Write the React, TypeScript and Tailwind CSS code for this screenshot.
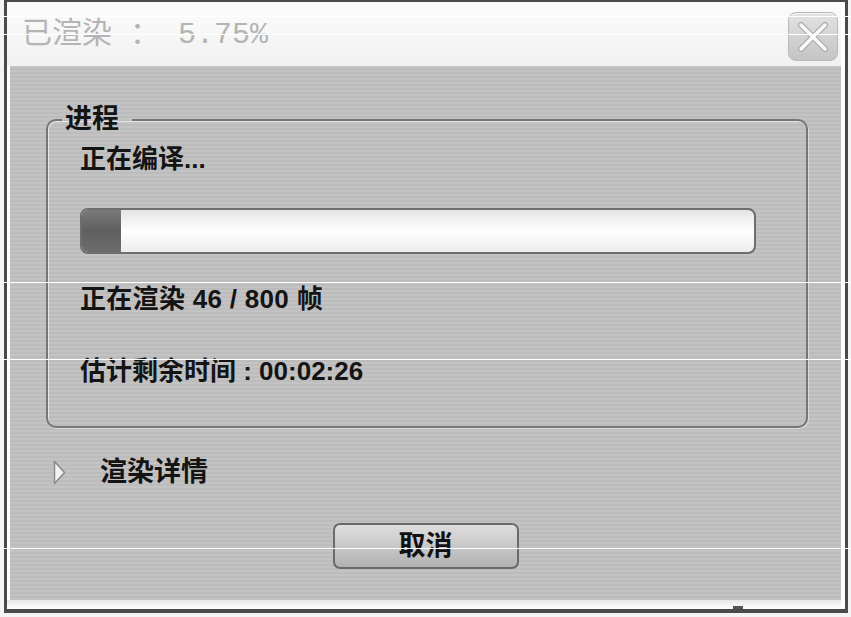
import React from 'react';

const cjk = "font-['Liberation_Sans','Noto_Sans_CJK_SC',sans-serif]";

// scanner artefacts in the source picture: thin white lines across the whole page
const scanLines = [16, 34, 282, 359, 548];

function CloseButton() {
  return (
    <button className="w-[50px] h-[49px] rounded-[8px] border border-[#b9b9b9] bg-gradient-to-b from-[#e2e2e2] to-[#c4c4c4] flex items-center justify-center shadow-[inset_0_1px_0_#f4f4f4]">
      <svg width="32" height="32" viewBox="0 0 32 32">
        <path d="M4 4 L28 28 M28 4 L4 28" stroke="#ababab" strokeWidth="6" strokeLinecap="round" />
        <path d="M4 4 L28 28 M28 4 L4 28" stroke="#fafafa" strokeWidth="3.5" strokeLinecap="round" />
      </svg>
    </button>
  );
}

function ProgressBar({ value }: { value: number }) {
  return (
    <div className="w-[676px] h-[46px] rounded-[8px] border-2 border-[#6e6e6e] bg-gradient-to-b from-[#e4e4e4] via-white to-[#ececec] overflow-hidden flex">
      <div
        className="h-full bg-gradient-to-b from-[#7a7a7a] via-[#5f5f5f] to-[#6d6d6d]"
        style={{ width: `${value}%` }}
      />
    </div>
  );
}

export default function App() {
  const rendered = 46;
  const total = 800;

  return (
    <div className="relative w-[851px] h-[617px] bg-[#f4f4f4] overflow-hidden">
      <div className="ml-[4px] w-[844px] h-[613px] border-t-2 border-l-[3px] border-r-[3px] border-b-[4px] border-[#4a4a4a] flex flex-col">
        {/* title bar */}
        <div className="h-[64px] shrink-0 bg-gradient-to-b from-[#fcfcfc] to-[#f1f1f1] border-r-[4px] border-white flex items-start justify-between pl-[15px] pr-[3px]">
          <div className="mt-[18px] text-[30px] leading-[30px] text-[#b4b4b4] font-['Liberation_Mono','Noto_Sans_CJK_SC',monospace] whitespace-pre">
            已渲染 ： 5.75%
          </div>
          <div className="mt-[10px]">
            <CloseButton />
          </div>
        </div>

        {/* body */}
        <div className="h-[534px] shrink-0 border-l-[3px] border-r-[4px] border-white bg-[repeating-linear-gradient(180deg,#c3c3c3_0px,#c3c3c3_2px,#bcbcbc_2px,#bcbcbc_4px)] flex flex-col">
          <fieldset className="mt-[40px] ml-[36px] w-[762px] h-[322px] rounded-[10px] border-2 border-[#767676] shadow-[inset_1px_1px_0_#e6e6e6,1px_1px_0_#dcdcdc] pl-[32px] pr-[49px]">
            <legend className={`-ml-[18px] pl-[3px] pr-[13px] text-[27px] leading-[27px] text-[#141414] font-semibold ${cjk}`}>
              进程
            </legend>
            <div className={`mt-[13px] text-[26px] leading-[26px] text-[#141414] font-semibold ${cjk}`}>
              正在编译...
            </div>
            <div className="mt-[36px]">
              <ProgressBar value={5.75} />
            </div>
            <div className={`mt-[32px] text-[26px] leading-[26px] text-[#141414] font-semibold tracking-[0.3px] ${cjk}`}>
              正在渲染 {rendered} / {total} 帧
            </div>
            <div className={`mt-[46px] text-[26px] leading-[26px] text-[#141414] font-semibold ${cjk}`}>
              估计剩余时间 : 00:02:26
            </div>
          </fieldset>

          <div className="mt-[31px] ml-[43px] flex items-center gap-[34px]">
            <svg width="13" height="25" viewBox="0 0 13 25">
              <path d="M1.5 1.5 L11.5 12.5 L1.5 23.5 Z" fill="#f2f2f2" stroke="#8a8a8a" strokeWidth="1.5" strokeLinejoin="round" />
            </svg>
            <span className={`text-[27px] leading-[27px] text-[#141414] font-semibold ${cjk}`}>渲染详情</span>
          </div>

          <div className="mt-[37px] flex justify-center">
            <button
              className={`w-[186px] h-[46px] rounded-[7px] border-2 border-[#6a6a6a] bg-gradient-to-b from-[#dedede] to-[#b2b2b2] text-[27px] leading-none text-[#111] font-bold ${cjk}`}
            >
              取消
            </button>
          </div>
        </div>

        {/* bottom highlight strip */}
        <div className="flex-1 bg-gradient-to-b from-[#e6e6e6] to-white border-r-[4px] border-white relative">
          <div className="absolute right-[98px] bottom-0 w-[10px] h-[3px] bg-[#555]" />
        </div>
      </div>

      {scanLines.map((y) => (
        <div key={y} className="absolute left-0 w-full h-px bg-white pointer-events-none" style={{ top: y }} />
      ))}
    </div>
  );
}
